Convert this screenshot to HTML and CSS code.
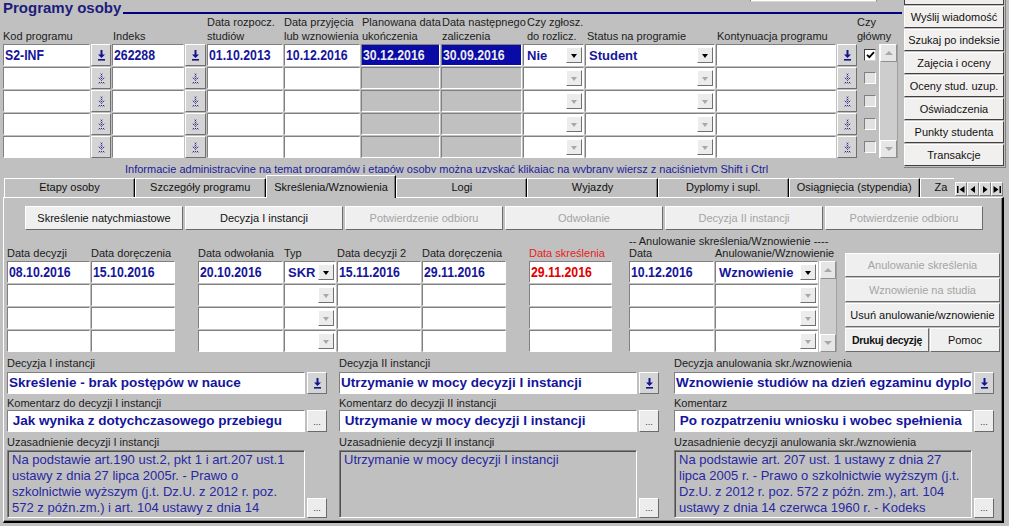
FILE: index.html
```html
<!DOCTYPE html>
<html lang="pl">
<head>
<meta charset="utf-8">
<title>Programy osoby</title>
<link rel="stylesheet" href="styles.css">
</head>
<body>
<svg class="defs" width="0" height="0" aria-hidden="true">
  <defs>
    <pattern id="stip" width="2" height="2" patternUnits="userSpaceOnUse">
      <rect width="2" height="2" fill="#c8c8d8"/>
      <rect width="1" height="1" fill="#30307a"/>
      <rect x="1" y="1" width="1" height="1" fill="#7070a8"/>
    </pattern>
  </defs>
</svg>

<div class="top">
  <div class="prog">
    <div class="stub-field"></div>
    <div class="title-row">
      <h1 class="title">Programy osoby</h1>
      <div class="title-line"></div>
    </div>

    <div class="pgrid">
      <div class="pvs vs"><div class="vsb up"></div><div class="vtrack"></div><div class="vsb dn"></div></div>

      <div class="hdr span2">Kod programu</div>
      <div class="hdr span2 pl1">Indeks</div>
      <div class="hdr">Data rozpocz.<br>studiów</div>
      <div class="hdr">Data przyjęcia<br>lub wznowienia</div>
      <div class="hdr pl1">Planowana data<br>ukończenia</div>
      <div class="hdr pl1">Data następnego<br>zaliczenia</div>
      <div class="hdr pl4">Czy zgłosz.<br>do rozlicz.</div>
      <div class="hdr pl2">Status na programie</div>
      <div class="hdr span2 pl1">Kontynuacja programu</div>
      <div class="hdr span2 czy">Czy<br>główny</div>

      <!-- row 1 -->
      <div class="f c1"><span class="nar">S2-INF</span></div>
      <div class="lov"><svg width="9" height="12" viewBox="0 0 9 12"><path d="M3.5 1h2v4.5H8L4.5 9 1 5.5h2.5z" fill="#14148c"/><rect x="1" y="10" width="7" height="1.6" fill="#14148c"/></svg></div>
      <div class="f"><span class="nar">262288</span></div>
      <div class="lov"><svg width="9" height="12" viewBox="0 0 9 12"><path d="M3.5 1h2v4.5H8L4.5 9 1 5.5h2.5z" fill="#14148c"/><rect x="1" y="10" width="7" height="1.6" fill="#14148c"/></svg></div>
      <div class="f"><span class="nar">01.10.2013</span></div>
      <div class="f"><span class="nar">10.12.2016</span></div>
      <div class="f hl"><span class="nar">30.12.2016</span></div>
      <div class="f hl"><span class="nar">30.09.2016</span></div>
      <div class="f sel bold"><span>Nie</span><i class="ddb"></i></div>
      <div class="f sel bold"><span>Student</span><i class="ddb"></i></div>
      <div class="f"></div>
      <div class="lov"><svg width="9" height="12" viewBox="0 0 9 12"><path d="M3.5 1h2v4.5H8L4.5 9 1 5.5h2.5z" fill="#14148c"/><rect x="1" y="10" width="7" height="1.6" fill="#14148c"/></svg></div>
      <div class="chk"><span class="cb on"><svg width="9" height="8" viewBox="0 0 9 8"><path d="M1 3.8l2.4 2.4L8 1.2" fill="none" stroke="#000" stroke-width="1.8"/></svg></span></div>

      <!-- row 2 -->
      <div class="f c1"></div>
      <div class="lov"><svg width="9" height="12" viewBox="0 0 9 12"><path d="M3.5 1h2v4.5H8L4.5 9 1 5.5h2.5z" fill="url(#stip)"/><rect x="1" y="10" width="7" height="1.6" fill="url(#stip)"/></svg></div>
      <div class="f"></div>
      <div class="lov"><svg width="9" height="12" viewBox="0 0 9 12"><path d="M3.5 1h2v4.5H8L4.5 9 1 5.5h2.5z" fill="url(#stip)"/><rect x="1" y="10" width="7" height="1.6" fill="url(#stip)"/></svg></div>
      <div class="f"></div>
      <div class="f"></div>
      <div class="f gray"></div>
      <div class="f gray"></div>
      <div class="f sel"><i class="ddb off"></i></div>
      <div class="f sel"><i class="ddb off"></i></div>
      <div class="f"></div>
      <div class="lov"><svg width="9" height="12" viewBox="0 0 9 12"><path d="M3.5 1h2v4.5H8L4.5 9 1 5.5h2.5z" fill="url(#stip)"/><rect x="1" y="10" width="7" height="1.6" fill="url(#stip)"/></svg></div>
      <div class="chk"><span class="cb"></span></div>

      <!-- row 3 -->
      <div class="f c1"></div>
      <div class="lov"><svg width="9" height="12" viewBox="0 0 9 12"><path d="M3.5 1h2v4.5H8L4.5 9 1 5.5h2.5z" fill="url(#stip)"/><rect x="1" y="10" width="7" height="1.6" fill="url(#stip)"/></svg></div>
      <div class="f"></div>
      <div class="lov"><svg width="9" height="12" viewBox="0 0 9 12"><path d="M3.5 1h2v4.5H8L4.5 9 1 5.5h2.5z" fill="url(#stip)"/><rect x="1" y="10" width="7" height="1.6" fill="url(#stip)"/></svg></div>
      <div class="f"></div>
      <div class="f"></div>
      <div class="f gray"></div>
      <div class="f gray"></div>
      <div class="f sel"><i class="ddb off"></i></div>
      <div class="f sel"><i class="ddb off"></i></div>
      <div class="f"></div>
      <div class="lov"><svg width="9" height="12" viewBox="0 0 9 12"><path d="M3.5 1h2v4.5H8L4.5 9 1 5.5h2.5z" fill="url(#stip)"/><rect x="1" y="10" width="7" height="1.6" fill="url(#stip)"/></svg></div>
      <div class="chk"><span class="cb"></span></div>

      <!-- row 4 -->
      <div class="f c1"></div>
      <div class="lov"><svg width="9" height="12" viewBox="0 0 9 12"><path d="M3.5 1h2v4.5H8L4.5 9 1 5.5h2.5z" fill="url(#stip)"/><rect x="1" y="10" width="7" height="1.6" fill="url(#stip)"/></svg></div>
      <div class="f"></div>
      <div class="lov"><svg width="9" height="12" viewBox="0 0 9 12"><path d="M3.5 1h2v4.5H8L4.5 9 1 5.5h2.5z" fill="url(#stip)"/><rect x="1" y="10" width="7" height="1.6" fill="url(#stip)"/></svg></div>
      <div class="f"></div>
      <div class="f"></div>
      <div class="f gray"></div>
      <div class="f gray"></div>
      <div class="f sel"><i class="ddb off"></i></div>
      <div class="f sel"><i class="ddb off"></i></div>
      <div class="f"></div>
      <div class="lov"><svg width="9" height="12" viewBox="0 0 9 12"><path d="M3.5 1h2v4.5H8L4.5 9 1 5.5h2.5z" fill="url(#stip)"/><rect x="1" y="10" width="7" height="1.6" fill="url(#stip)"/></svg></div>
      <div class="chk"><span class="cb"></span></div>

      <!-- row 5 -->
      <div class="f c1"></div>
      <div class="lov"><svg width="9" height="12" viewBox="0 0 9 12"><path d="M3.5 1h2v4.5H8L4.5 9 1 5.5h2.5z" fill="url(#stip)"/><rect x="1" y="10" width="7" height="1.6" fill="url(#stip)"/></svg></div>
      <div class="f"></div>
      <div class="lov"><svg width="9" height="12" viewBox="0 0 9 12"><path d="M3.5 1h2v4.5H8L4.5 9 1 5.5h2.5z" fill="url(#stip)"/><rect x="1" y="10" width="7" height="1.6" fill="url(#stip)"/></svg></div>
      <div class="f"></div>
      <div class="f"></div>
      <div class="f gray"></div>
      <div class="f gray"></div>
      <div class="f sel"><i class="ddb off"></i></div>
      <div class="f sel"><i class="ddb off"></i></div>
      <div class="f"></div>
      <div class="lov"><svg width="9" height="12" viewBox="0 0 9 12"><path d="M3.5 1h2v4.5H8L4.5 9 1 5.5h2.5z" fill="url(#stip)"/><rect x="1" y="10" width="7" height="1.6" fill="url(#stip)"/></svg></div>
      <div class="chk"><span class="cb"></span></div>
    </div>

    <div class="info">Informacje administracyjne na temat programów i etapów osoby można uzyskać klikając na wybrany wiersz z naciśniętym Shift i Ctrl</div>
  </div>

  <div class="side">
    <div class="side-stub"></div>
    <div class="sbtn">Wyślij wiadomość</div>
    <div class="sbtn">Szukaj po indeksie</div>
    <div class="sbtn">Zajęcia i oceny</div>
    <div class="sbtn">Oceny stud. uzup.</div>
    <div class="sbtn">Oświadczenia</div>
    <div class="sbtn">Punkty studenta</div>
    <div class="sbtn">Transakcje</div>
  </div>
</div>

<div class="tabs">
  <div class="tab">Etapy osoby</div>
  <div class="tab">Szczegóły programu</div>
  <div class="tab act">Skreślenia/Wznowienia</div>
  <div class="tab">Logi</div>
  <div class="tab">Wyjazdy</div>
  <div class="tab">Dyplomy i supl.</div>
  <div class="tab">Osiągnięcia (stypendia)</div>
  <div class="tab last">Za</div>
  <div class="tab-arrows">
    <span class="tarr"><svg width="8" height="7" viewBox="0 0 8 7"><rect width="1.5" height="7"/><path d="M7.5 0v7L2.5 3.5z"/></svg></span>
    <span class="tarr"><svg width="6" height="7" viewBox="0 0 6 7"><path d="M5 0v7L0.5 3.5z"/></svg></span>
    <span class="tarr"><svg width="6" height="7" viewBox="0 0 6 7"><path d="M1 0v7l4.5-3.5z"/></svg></span>
    <span class="tarr"><svg width="8" height="7" viewBox="0 0 8 7"><path d="M0.5 0v7l5-3.5z"/><rect x="6.5" width="1.5" height="7"/></svg></span>
  </div>
</div>

<div class="panel">
  <div class="btnrow">
    <div class="pbtn">Skreślenie natychmiastowe</div>
    <div class="pbtn">Decyzja I instancji</div>
    <div class="pbtn dis">Potwierdzenie odbioru</div>
    <div class="pbtn dis">Odwołanie</div>
    <div class="pbtn dis">Decyzja II instancji</div>
    <div class="pbtn dis">Potwierdzenie odbioru</div>
  </div>

  <div class="anul-title">-- Anulowanie skreślenia/Wznowienie ----</div>

  <div class="mid">
    <div class="mgrid">
      <div class="mvs vs"><div class="vsb up"></div><div class="vtrack"></div><div class="vsb dn"></div></div>

      <div class="ml c1">Data decyzji</div>
      <div class="ml">Data doręczenia</div>
      <div class="ml c4">Data odwołania</div>
      <div class="ml">Typ</div>
      <div class="ml">Data decyzji 2</div>
      <div class="ml">Data doręczenia</div>
      <div class="ml c9 red">Data skreślenia</div>
      <div class="ml c11">Data</div>
      <div class="ml">Anulowanie/Wznowienie</div>

      <div class="f c1"><span class="nar">08.10.2016</span></div>
      <div class="f"><span class="nar">15.10.2016</span></div>
      <div class="f c4"><span class="nar">20.10.2016</span></div>
      <div class="f sel bold"><span>SKR</span><i class="ddb"></i></div>
      <div class="f"><span class="nar">15.11.2016</span></div>
      <div class="f"><span class="nar">29.11.2016</span></div>
      <div class="f c9 redv"><span class="nar">29.11.2016</span></div>
      <div class="f c11"><span class="nar">10.12.2016</span></div>
      <div class="f sel bold"><span>Wznowienie</span><i class="ddb"></i></div>

      <div class="f c1"></div><div class="f"></div><div class="f c4"></div>
      <div class="f sel"><i class="ddb off"></i></div>
      <div class="f"></div><div class="f"></div><div class="f c9"></div><div class="f c11"></div>
      <div class="f sel"><i class="ddb off"></i></div>

      <div class="f c1"></div><div class="f"></div><div class="f c4"></div>
      <div class="f sel"><i class="ddb off"></i></div>
      <div class="f"></div><div class="f"></div><div class="f c9"></div><div class="f c11"></div>
      <div class="f sel"><i class="ddb off"></i></div>

      <div class="f c1"></div><div class="f"></div><div class="f c4"></div>
      <div class="f sel"><i class="ddb off"></i></div>
      <div class="f"></div><div class="f"></div><div class="f c9"></div><div class="f c11"></div>
      <div class="f sel"><i class="ddb off"></i></div>
    </div>

    <div class="mbtns">
      <div class="pbtn mb dis">Anulowanie skreślenia</div>
      <div class="pbtn mb dis">Wznowienie na studia</div>
      <div class="pbtn mb">Usuń anulowanie/wznowienie</div>
      <div class="mb-row">
        <div class="pbtn mb print">Drukuj decyzję</div>
        <div class="pbtn mb help">Pomoc</div>
      </div>
    </div>
  </div>

  <div class="bottom">
    <div class="bcol">
      <div class="blab">Decyzja I instancji</div>
      <div class="brow r1">
        <div class="f bf">Skreślenie - brak postępów w nauce</div>
        <div class="lov bl"><svg width="9" height="12" viewBox="0 0 9 12"><path d="M3.5 1h2v4.5H8L4.5 9 1 5.5h2.5z" fill="#14148c"/><rect x="1" y="10" width="7" height="1.6" fill="#14148c"/></svg></div>
      </div>
      <div class="blab l2">Komentarz do decyzji I instancji</div>
      <div class="brow">
        <div class="f bf">&nbsp;Jak wynika z dotychczasowego przebiegu</div>
        <div class="dots">...</div>
      </div>
      <div class="blab l3">Uzasadnienie decyzji I instancji</div>
      <div class="brow r3">
        <div class="ta">Na podstawie art.190 ust.2, pkt 1 i art.207 ust.1<br>ustawy z dnia 27 lipca 2005r. - Prawo o<br>szkolnictwie wyższym (j.t. Dz.U. z 2012 r. poz.<br>572 z późn.zm.) i art. 104 ustawy z dnia 14</div>
        <div class="dots">...</div>
      </div>
    </div>

    <div class="bcol">
      <div class="blab">Decyzja II instancji</div>
      <div class="brow r1">
        <div class="f bf">Utrzymanie w mocy decyzji I instancji</div>
        <div class="lov bl"><svg width="9" height="12" viewBox="0 0 9 12"><path d="M3.5 1h2v4.5H8L4.5 9 1 5.5h2.5z" fill="#14148c"/><rect x="1" y="10" width="7" height="1.6" fill="#14148c"/></svg></div>
      </div>
      <div class="blab l2">Komentarz do decyzji II instancji</div>
      <div class="brow">
        <div class="f bf">&nbsp;Utrzymanie w mocy decyzji I instancji</div>
        <div class="dots">...</div>
      </div>
      <div class="blab l3">Uzasadnienie decyzji II instancji</div>
      <div class="brow r3">
        <div class="ta">Utrzymanie w mocy decyzji I instancji</div>
        <div class="dots">...</div>
      </div>
    </div>

    <div class="bcol">
      <div class="blab">Decyzja anulowania skr./wznowienia</div>
      <div class="brow r1">
        <div class="f bf">Wznowienie studiów na dzień egzaminu dyplomowego</div>
        <div class="lov bl"><svg width="9" height="12" viewBox="0 0 9 12"><path d="M3.5 1h2v4.5H8L4.5 9 1 5.5h2.5z" fill="#14148c"/><rect x="1" y="10" width="7" height="1.6" fill="#14148c"/></svg></div>
      </div>
      <div class="blab l2">Komentarz</div>
      <div class="brow">
        <div class="f bf">&nbsp;Po rozpatrzeniu wniosku i wobec spełnienia</div>
        <div class="dots">...</div>
      </div>
      <div class="blab l3">Uzasadnienie decyzji anulowania skr./wznowienia</div>
      <div class="brow r3">
        <div class="ta">Na podstawie art. 207 ust. 1 ustawy z dnia 27<br>lipca 2005 r. - Prawo o szkolnictwie wyższym (j.t.<br>Dz.U. z 2012 r. poz. 572 z późn. zm.), art. 104<br>ustawy z dnia 14 czerwca 1960 r. - Kodeks</div>
        <div class="dots">...</div>
      </div>
    </div>
  </div>
</div>
</body>
</html>
```

FILE: styles.css
```css
* { box-sizing: border-box; }
html, body { margin: 0; padding: 0; }
body {
  width: 1009px;
  height: 526px;
  overflow: hidden;
  background: #c0c0c0;
  font-family: "Liberation Sans", Arial, sans-serif;
  font-size: 11px;
  color: #1c1c1c;
}
.defs { display: block; width: 0; height: 0; }

/* ---------- top block ---------- */
.top { display: flex; height: 173px; }
.prog { width: 902px; position: relative; }
.stub-field {
  position: absolute; left: 750px; top: -20px;
  width: 127px; height: 22px;
  background: #fff; border: 1px solid #808080; border-bottom-color: #d8d8d8;
}
.title-row { display: flex; height: 16px; }
.title {
  margin: 0 0 0 3px;
  font: bold 15px/16px "Liberation Sans", Arial, sans-serif;
  color: #1c1c7c;
  white-space: nowrap;
}
.title-line { flex: 1; height: 2px; margin: 12px 0 0 2px; background: #000080; }

.pgrid {
  display: grid;
  grid-template-columns: 87px 20px 72px 21px 76px 76px 79px 81px 61px 130px 120px 20px 20px 19px;
  grid-template-rows: 27px repeat(5, 22px);
  gap: 1px;
  padding-left: 3px;
}
.hdr { align-self: end; line-height: 13.5px; white-space: nowrap; }
.span2 { grid-column: span 2; }
.pl1 { padding-left: 1px; }
.pl2 { padding-left: 2px; }
.pl4 { padding-left: 4px; }
.czy { margin-left: -1px; }
.c1 { grid-column: 1; }
.c4 { grid-column: 4; }
.c9 { grid-column: 9; }
.c11 { grid-column: 11; }

/* fields */
.f {
  background: #fff;
  border: 1px solid;
  border-color: #808080 #fff #fff #808080;
  color: #16169a;
  white-space: nowrap;
  overflow: hidden;
  padding-left: 1px;
}
/* condensed bold field text (Arial Narrow look) */
.nar {
  display: inline-block;
  font: bold 15px/20px "Liberation Sans", Arial, sans-serif;
  transform: scaleX(0.82);
  transform-origin: 0 50%;
}
.bold { font: bold 13px/20px "Liberation Sans", Arial, sans-serif; }
.hl { background: #0a0aa6; color: #ececec; }
.gray { background: #c0c0c0; }
.sel { display: flex; padding-left: 3px; }
.sel span { padding-top: 1px; }
.ddb {
  flex: none;
  width: 16px; height: 16px;
  margin: 2px 1px 0 auto;
  background: #ececec;
  border: 1px solid;
  border-color: #fff #707070 #707070 #fff;
  display: flex; align-items: center; justify-content: center;
}
.ddb::after {
  content: "";
  border-top: 4px solid #000;
  border-left: 3.5px solid transparent;
  border-right: 3.5px solid transparent;
  margin-top: 1px;
}
.ddb.off::after { border-top-color: #a8a8a8; }

.lov {
  background: #d4d4d4;
  border: 1px solid;
  border-color: #fff #707070 #707070 #fff;
  display: flex; align-items: center; justify-content: center;
}
.lov svg { display: block; }

.chk { display: flex; align-items: center; padding-left: 6px; }
.cb {
  width: 12px; height: 12px;
  background: #e2e2e2;
  border: 1px solid;
  border-color: #808080 #fff #fff #808080;
  display: flex; align-items: center; justify-content: center;
}
.cb.on { background: #fff; border-color: #404040 #d0d0d0 #d0d0d0 #404040; }

/* scrollbars */
.vs {
  display: flex; flex-direction: column;
  background: #cdcdcd;
  border-left: 1px solid #fff;
  border-right: 1px solid #a0a0a0;
}
.pvs { grid-column: 14; grid-row: 2 / 7; }
.mvs { grid-column: 13; grid-row: 2 / 6; }
.vsb {
  height: 18px;
  background: #e6e6e6;
  border: 1px solid;
  border-color: #fff #909090 #909090 #fff;
  display: flex; align-items: center; justify-content: center;
}
.vsb::after { content: ""; border-left: 4px solid transparent; border-right: 4px solid transparent; }
.vsb.up::after { border-bottom: 4px solid #a8a8a8; }
.vsb.dn::after { border-top: 4px solid #a8a8a8; }
.vtrack { flex: 1; }

.info {
  height: 15px;
  overflow: hidden;
  padding: 4px 0 0 125px;
  line-height: 14px;
  color: #20209a;
  white-space: nowrap;
}

/* right buttons */
.side {
  width: 102px; height: 168px;
  margin-left: 2px;
  display: flex; flex-direction: column; gap: 1px;
  border-right: 1px solid #808080;
  border-bottom: 1px solid #808080;
}
.side-stub { height: 5px; width: 100px; background: #f0eeec; border: 1px solid #404040; border-top: 0; }
.sbtn {
  height: 22px; width: 100px;
  background: #f2f0ee;
  border: 1px solid;
  border-color: #fff #404040 #404040 #fff;
  text-align: center;
  line-height: 20px;
  white-space: nowrap;
  color: #111;
}

/* ---------- tabs ---------- */
.tabs {
  display: flex; align-items: flex-end;
  height: 24px;
  padding-left: 4px;
  position: relative;
}
.tab {
  flex: none;
  width: 130.8px; height: 19px;
  border-top: 1px solid #fff;
  border-left: 1px solid #fff;
  border-right: 1px solid #000;
  box-shadow: inset -1px 0 #808080;
  text-align: center;
  line-height: 17px;
  white-space: nowrap;
  overflow: hidden;
  color: #111;
}
.tab.act {
  height: 23px;
  margin-bottom: -1px;
  position: relative; z-index: 1;
  background: #c0c0c0;
  padding-top: 3px;
}
.tab.last { width: 34px; text-align: left; padding-left: 14px; border-right: 0; box-shadow: none; }
.tab-arrows {
  position: absolute; left: 955px; top: 9px;
  display: flex; z-index: 2;
}
.tarr {
  width: 12px; height: 14px;
  display: flex; align-items: center; justify-content: center;
  background: #d8d8d8;
  border: 1px solid;
  border-color: #fff #808080 #808080 #fff;
}
.tarr svg { display: block; fill: #000; }

/* ---------- panel ---------- */
.panel {
  margin-left: 3px;
  width: 1001px; height: 326px;
  border-top: 1px solid #fff;
  border-left: 1px solid #fff;
  border-right: 2px solid #000;
  border-bottom: 2px solid #000;
  box-shadow: inset -1px -1px #808080;
}
.btnrow { display: flex; gap: 2px; margin: 8px 0 0 21px; }
.pbtn {
  width: 158px; height: 24px;
  background: #efefef;
  border: 1px solid;
  border-color: #fff #6a6a6a #6a6a6a #fff;
  text-align: center;
  line-height: 22px;
  white-space: nowrap;
  overflow: hidden;
  color: #111;
}
.dis { color: #a4a4a4; }
.anul-title { margin: 5px 0 0 625px; height: 12px; line-height: 12px; white-space: nowrap; }

.mid { display: flex; margin-left: 3px; }
.mgrid {
  display: grid;
  grid-template-columns: 83px 84px 21px 85px 52px 84px 84px 21px 83px 15px 85px 103px 18px;
  grid-template-rows: 13px repeat(4, 22px);
  gap: 1px;
}
.ml { line-height: 13px; white-space: nowrap; }
.red { color: #e8201c; }
.redv { color: #e00000; }
.mbtns { margin: 6px 0 0 8px; width: 155px; display: flex; flex-direction: column; gap: 1px; }
.mb { width: 155px; }
.mb-row { display: flex; gap: 1px; }
.mb.print { width: 84px; font-weight: bold; font-size: 10.5px; letter-spacing: -0.3px; }
.mb.help { width: 70px; }

/* bottom */
.bottom {
  display: grid;
  grid-template-columns: 332px 335px 320px;
  margin: 4px 0 0 3px;
}
.blab { height: 14px; line-height: 14px; white-space: nowrap; }
.blab.l2 { margin-top: 2px; }
.blab.l3 { margin-top: 3px; }
.brow { display: flex; gap: 2px; height: 22px; }
.brow.r1 { margin-top: 2px; }
.brow.r3 { height: 68px; margin-top: 1px; align-items: flex-end; }
.bf {
  width: 298px; flex: none;
  font: bold 13.5px/20px "Liberation Sans", Arial, sans-serif;
  color: #14149c;
}
.bl { width: 20px; flex: none; }
.dots {
  width: 20px; flex: none;
  background: #ececec;
  border: 1px solid;
  border-color: #fff #6a6a6a #6a6a6a #fff;
  font-size: 9px; line-height: 1;
  color: #333;
  display: flex; align-items: flex-end; justify-content: center;
  padding-bottom: 4px;
}
.r3 .dots { height: 20px; }
.ta {
  width: 298px; height: 68px; flex: none;
  background: #c0c0c0;
  border: 1px solid;
  border-color: #808080 #fff #fff #808080;
  box-shadow: inset 1px 1px #505050;
  padding: 1px 4px;
  font: 13px/16px "Liberation Sans", Arial, sans-serif;
  color: #2828a2;
  overflow: hidden;
  white-space: nowrap;
}
```
